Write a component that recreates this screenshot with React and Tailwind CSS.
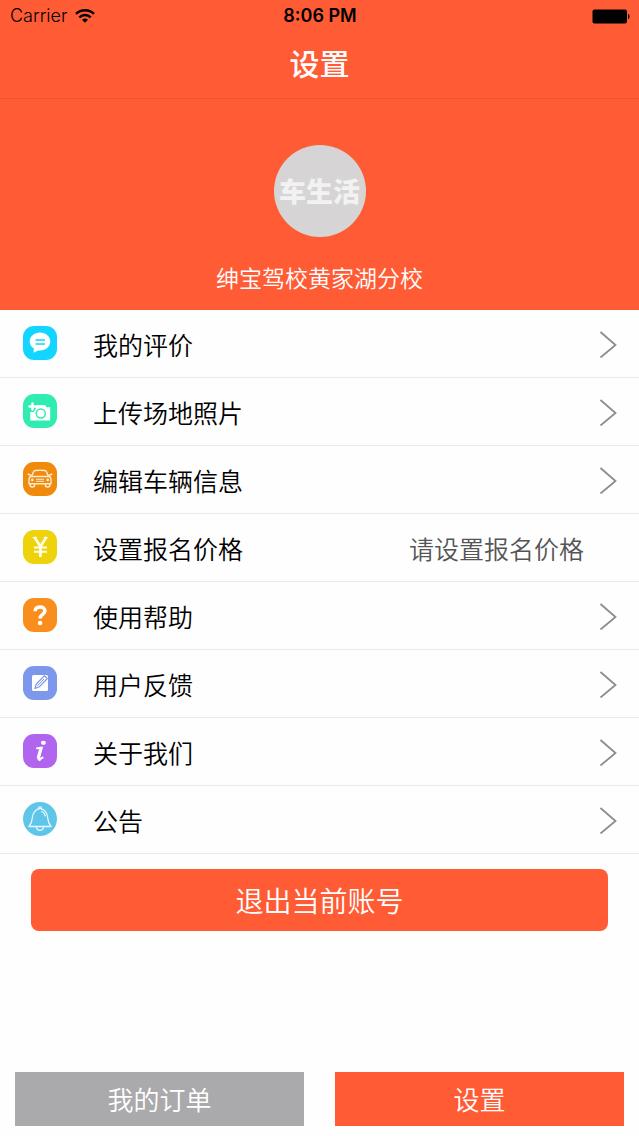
import { useState } from 'react';

const CommentIcon = () => (
  <svg viewBox="0 0 34 34" className="w-full h-full" fill="none" aria-hidden="true">
    <path d="M17 6.500c5.800 0 10.300 4 10.300 9s-4.500 9-10.300 9c-.6 0-1.200 0-1.800-.1l-4.700 2.300.4-4.200c-2.600-1.600-4.200-4-4.200-7 0-5 4.500-9 10.300-9z" fill="#fff" />
    <path d="M12.500 14h9.500M12.500 18h9.500" stroke="#12d6ff" strokeWidth="1.300" />
  </svg>
);

const CameraIcon = () => (
  <svg viewBox="0 0 34 34" className="w-full h-full" fill="none" aria-hidden="true">
    <path d="M13.500 11h8.500l1.500 2.200h3.700v13.300H7.300V18h3.200l2-2.500z" fill="#fff" />
    <circle cx="17.800" cy="19.500" r="4.500" stroke="#2fedb0" strokeWidth="1.500" />
    <path d="M9.500 9.500v6M6.500 12.500h6" stroke="#fff" strokeWidth="2.400" strokeLinecap="round" />
  </svg>
);

const CarIcon = () => (
  <svg viewBox="0 0 34 34" className="w-full h-full" fill="none" stroke="#ffe9cc" strokeWidth="1.500" strokeLinejoin="round" aria-hidden="true">
    <path d="M8.500 14.500l2.300-5.200C11.100 8.500 12 8.300 17 8.300s5.900.2 6.200 1l2.300 5.200" />
    <path d="M7.500 14.500h19c1 .6 1.500 1.700 1.500 3v4.300H6v-4.300c0-1.300.5-2.400 1.500-3z" />
    <path d="M7.300 22v1.800c0 1.500 4.200 1.500 4.200 0V22M22.500 22v1.800c0 1.500 4.200 1.500 4.200 0V22" />
    <path d="M8 13.300l-2.800-1M26 13.300l2.800-1" strokeLinecap="round" />
    <path d="M13 17.300h8M13 19.300h8" strokeWidth="1" />
    <circle cx="9.300" cy="18" r="1.400" fill="#ffe9cc" stroke="none" />
    <circle cx="24.700" cy="18" r="1.400" fill="#ffe9cc" stroke="none" />
  </svg>
);

const YenIcon = () => (
  <svg viewBox="0 0 34 34" className="w-full h-full" fill="none" stroke="#fffde8" strokeWidth="2" aria-hidden="true">
    <path d="M11.300 7l6.100 9.500L23.500 7M17.400 16.500V27" strokeWidth="2.700" />
    <path d="M9.500 7.500h4.500M20.800 7.500h4" strokeWidth="1.200" />
    <path d="M11 17.500h13M11 21.800h13" />
  </svg>
);

const QuestionIcon = () => (
  <svg viewBox="0 0 34 34" className="w-full h-full" fill="none" aria-hidden="true">
    <path d="M12.200 13.200c0-2.700 1.900-4.200 4.800-4.200s4.900 1.500 4.900 4c0 3.400-4.800 3.400-4.800 7.400" stroke="#fff" strokeWidth="3.600" />
    <circle cx="17.100" cy="25" r="2.300" fill="#fff" />
  </svg>
);

const EditIcon = () => (
  <svg viewBox="0 0 34 34" className="w-full h-full" fill="none" aria-hidden="true">
    <rect x="9" y="9" width="16" height="16" rx="1.500" fill="#fff" />
    <path d="M12 22.500l1.300-4.500 8-8.200 3 2.700-8 8.300z" fill="#fff" stroke="#7d97ea" strokeWidth="1.200" strokeLinejoin="round" />
    <path d="M14.500 19.800l6.500-6.800" stroke="#7d97ea" strokeWidth="1" />
  </svg>
);

const InfoIcon = () => (
  <svg viewBox="0 0 34 34" className="w-full h-full" fill="none" aria-hidden="true">
    <ellipse cx="20.400" cy="8.800" rx="2.500" ry="2.100" fill="#fff" />
    <path d="M14 14.200c2 .3 3.400-.4 4.900-.7l-2.700 9.300c-.5 2.500 1 2.600 3.400.8" stroke="#fff" strokeWidth="2" strokeLinecap="round" strokeLinejoin="round" />
    <path d="M17.700 15l-2.400 8.500 1.200 2" stroke="#fff" strokeWidth="3" strokeLinecap="round" strokeLinejoin="round" />
  </svg>
);

const BellIcon = () => (
  <svg viewBox="0 0 34 34" className="w-full h-full" fill="none" stroke="#e4f7ff" strokeWidth="1.300" strokeLinejoin="round" strokeLinecap="round" aria-hidden="true">
    <path d="M17 6.300c-5.300 1.200-7.300 4.700-7.700 9.700-.2 3-.9 5.500-3.300 8.500h22c-2.400-3-3.100-5.500-3.300-8.500-.4-5-2.400-8.500-7.700-9.700z" />
    <path d="M15.500 6.300c0-2 3-2 3 0M13.500 25c.5 4.500 6.500 4.500 7 0" />
    <path d="M18.800 9.500c2 .8 3 2.300 3.400 4.300" />
  </svg>
);

const menuItems = [
  { label: '我的评价', icon: CommentIcon, color: 'bg-[#12d6ff]' },
  { label: '上传场地照片', icon: CameraIcon, color: 'bg-[#2fedb0]' },
  { label: '编辑车辆信息', icon: CarIcon, color: 'bg-[#f08a0c]' },
  { label: '设置报名价格', icon: YenIcon, color: 'bg-[#edd20c]', value: '请设置报名价格' },
  { label: '使用帮助', icon: QuestionIcon, color: 'bg-[#f98e1d]' },
  { label: '用户反馈', icon: EditIcon, color: 'bg-[#7d97ea]' },
  { label: '关于我们', icon: InfoIcon, color: 'bg-[#b164ee]' },
  { label: '公告', icon: BellIcon, color: 'bg-[#5fc6ea]', round: true },
];

const StatusBar = () => (
  <div className="grid grid-cols-3 items-center h-8 pl-[10px] pr-[9px] text-black font-['Inter',sans-serif] text-lg leading-8">
    <div className="flex items-center gap-2">
      <span>Carrier</span>
      <svg viewBox="0 0 20 14" className="w-5 h-[14px]" fill="none" stroke="#000" strokeWidth="2.500" aria-hidden="true">
        <path d="M1 4.800c5-4.700 13-4.700 18 0M4.300 8.300c3.200-3 8.200-3 11.400 0" />
        <path d="M10 13.800l-3-3.100c1.700-1.500 4.300-1.500 6 0z" fill="#000" stroke="none" />
      </svg>
    </div>
    <span className="text-center font-semibold">8:06 PM</span>
    <svg viewBox="0 0 38 15" className="w-[38px] h-[15px] justify-self-end" aria-hidden="true">
      <rect x="0.500" y="0.500" width="34.500" height="14" rx="2" fill="#000" />
      <path d="M36 5c2 .3 2 4.700 0 5z" fill="#000" />
    </svg>
  </div>
);

const MenuRow = ({ item }) => {
  const Icon = item.icon;

  return (
    <li className="border-b border-[#e9e9ed]">
      <button type="button" className="flex items-center w-full h-[67px] pl-[23px] pr-[22px] text-left text-[25px] leading-9 cursor-pointer">
        <span className={`w-[34px] h-[34px] mt-4 self-start shrink-0 overflow-hidden ${item.round ? 'rounded-full' : 'rounded-[11px]'} ${item.color}`}>
          <Icon />
        </span>
        <span className="ml-9 flex-1 text-black">{item.label}</span>
        {item.value ? (
          <span className="mr-[33px] text-[#555]">{item.value}</span>
        ) : (
          <svg viewBox="0 0 18 28" className="w-[18px] h-7" fill="none" stroke="#8c8c91" strokeWidth="1.800" aria-hidden="true">
            <path d="M1.500 2L16.500 15 1.500 27.500" />
          </svg>
        )}
      </button>
    </li>
  );
};

export default function App() {
  const [tab, setTab] = useState('settings');

  const tabColor = (name) => (tab === name ? 'bg-[#ff5b35]' : 'bg-[#aaa9ab]');

  return (
    <div className="min-h-screen flex flex-col bg-[#fefefe] font-[350] font-['Noto_Sans_CJK_SC',sans-serif]">
      <header className="bg-[#ff5b35] text-white text-center">
        <StatusBar />
        <div className="h-[67px] border-b border-[#ec5431]">
          <h1 className="text-[30px] leading-[60px] font-medium">设置</h1>
        </div>
        <div className="flex flex-col items-center pt-[46px] h-[211px]">
          <div className="w-[92px] h-[92px] rounded-full bg-[#d6d4d4] flex items-center justify-center text-[27px] leading-9 font-black text-[#f2f2f2] whitespace-nowrap">
            车生活
          </div>
          <p className="mt-5 text-[23px] leading-10">绅宝驾校黄家湖分校</p>
        </div>
      </header>

      <main>
        <ul>
          {menuItems.map((item) => (
            <MenuRow key={item.label} item={item} />
          ))}
        </ul>
        <div className="px-[31px] pt-[15px]">
          <button type="button" className="w-full h-[62px] rounded-lg bg-[#ff5b35] text-white text-[28px] leading-10 cursor-pointer">
            退出当前账号
          </button>
        </div>
      </main>

      <nav className="mt-auto grid grid-cols-2 gap-[31px] px-[15px] pb-[10px] text-white text-[26px] leading-9">
        <button type="button" onClick={() => setTab('orders')} className={`h-[54px] cursor-pointer ${tabColor('orders')}`}>
          我的订单
        </button>
        <button type="button" onClick={() => setTab('settings')} className={`h-[54px] cursor-pointer ${tabColor('settings')}`}>
          设置
        </button>
      </nav>
    </div>
  );
}
